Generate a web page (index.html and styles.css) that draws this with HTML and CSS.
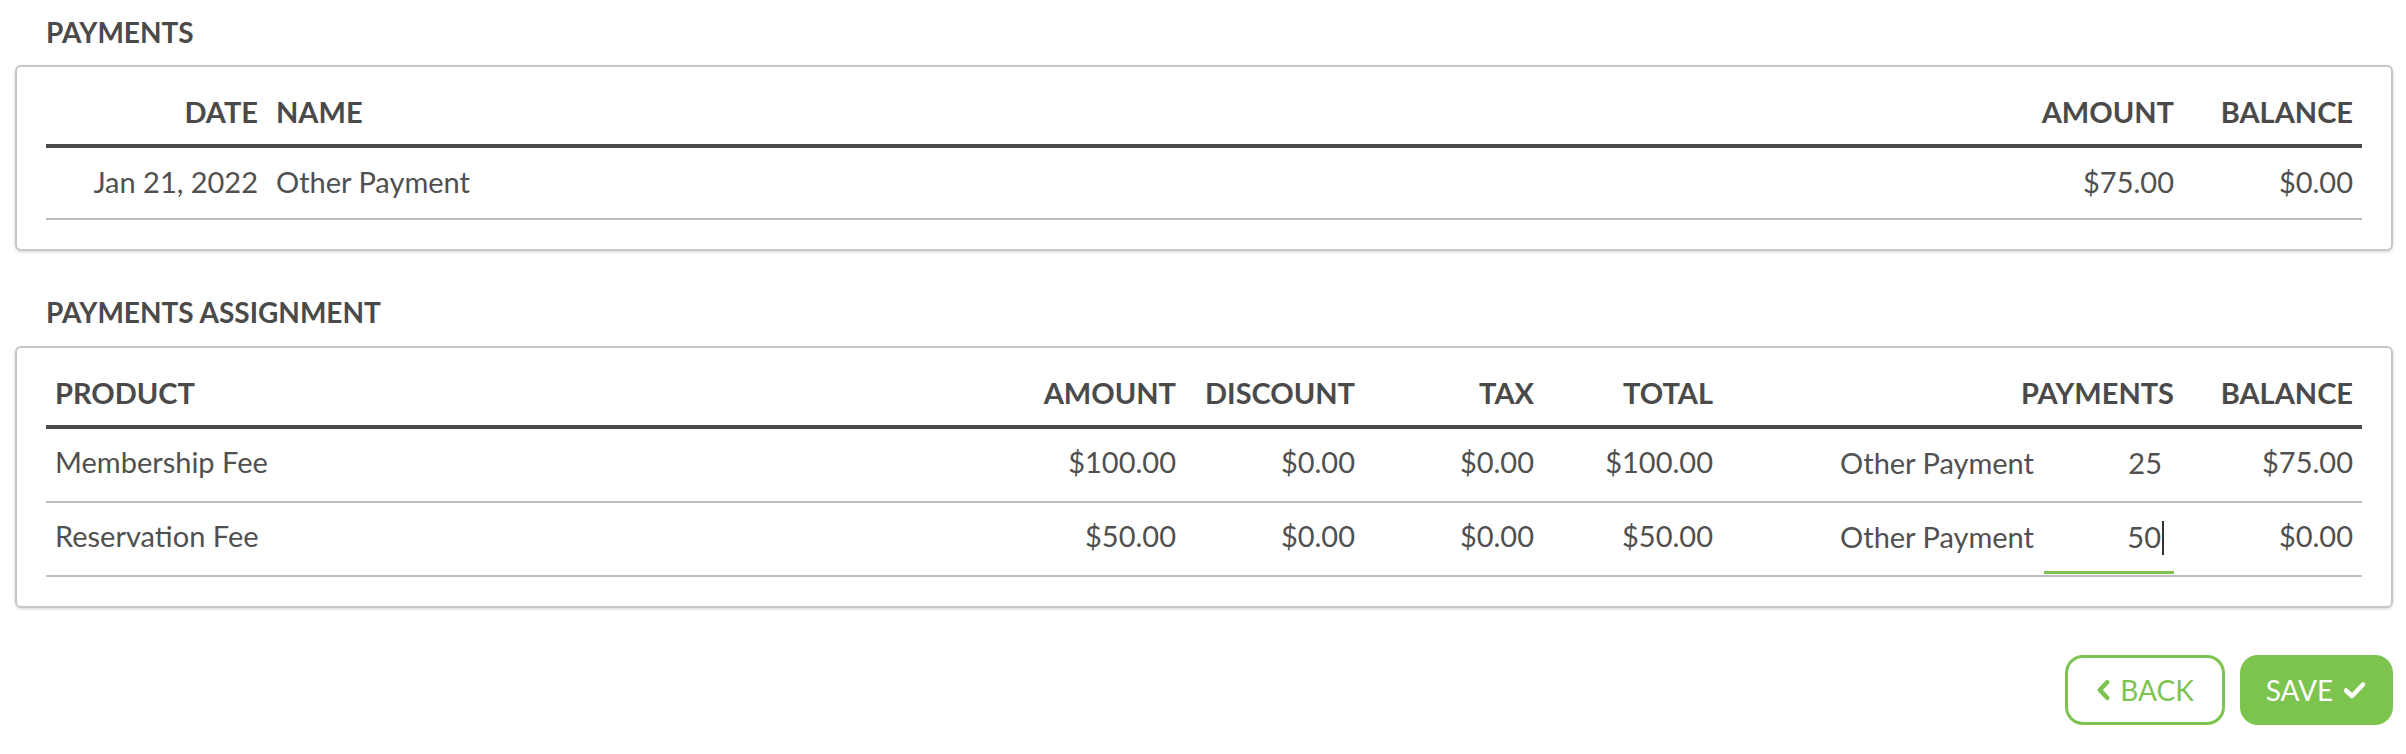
FILE: index.html
```html
<!DOCTYPE html>
<html lang="en">
<head>
    <meta charset="UTF-8">
    <meta name="viewport" content="width=device-width, initial-scale=1.0">
    <title>Payments</title>
    <link rel="stylesheet" href="styles.css">
</head>
<body>
    <div class="page">
        <h2 class="section-title">PAYMENTS</h2>
        <div class="card">
            <table class="grid">
                <thead>
                    <tr>
                        <th class="col-date right">DATE</th>
                        <th>NAME</th>
                        <th class="col-money right">AMOUNT</th>
                        <th class="col-money right">BALANCE</th>
                    </tr>
                </thead>
                <tbody>
                    <tr>
                        <td class="right">Jan 21, 2022</td>
                        <td>Other Payment</td>
                        <td class="right">$75.00</td>
                        <td class="right">$0.00</td>
                    </tr>
                </tbody>
            </table>
        </div>

        <h2 class="section-title second">PAYMENTS ASSIGNMENT</h2>
        <div class="card">
            <table class="grid assign">
                <thead>
                    <tr>
                        <th>PRODUCT</th>
                        <th class="col-money right">AMOUNT</th>
                        <th class="col-money right">DISCOUNT</th>
                        <th class="col-money right">TAX</th>
                        <th class="col-money right">TOTAL</th>
                        <th class="col-pay right">PAYMENTS</th>
                        <th class="col-money right">BALANCE</th>
                    </tr>
                </thead>
                <tbody>
                    <tr>
                        <td>Membership Fee</td>
                        <td class="right">$100.00</td>
                        <td class="right">$0.00</td>
                        <td class="right">$0.00</td>
                        <td class="right">$100.00</td>
                        <td class="pay-cell">
                            <div class="pay-line">
                                <span class="pay-name">Other Payment</span>
                                <span class="pay-input">25</span>
                            </div>
                        </td>
                        <td class="right">$75.00</td>
                    </tr>
                    <tr>
                        <td>Reservation Fee</td>
                        <td class="right">$50.00</td>
                        <td class="right">$0.00</td>
                        <td class="right">$0.00</td>
                        <td class="right">$50.00</td>
                        <td class="pay-cell">
                            <div class="pay-line">
                                <span class="pay-name">Other Payment</span>
                                <span class="pay-input active">50<span class="caret"></span></span>
                            </div>
                        </td>
                        <td class="right">$0.00</td>
                    </tr>
                </tbody>
            </table>
        </div>

        <div class="actions">
            <button class="btn btn-outline" type="button">
                <svg class="icon" viewBox="0 0 16 24" width="15" height="22"><path d="M12 3.5 L4 12 L12 20.5" fill="none" stroke="currentColor" stroke-width="5" stroke-linecap="round" stroke-linejoin="round"/></svg>
                BACK
            </button>
            <button class="btn btn-solid" type="submit">
                SAVE
                <svg class="icon" viewBox="0 0 24 20" width="25" height="20"><path d="M3.5 10.5 L9.5 16 L20.5 4.5" fill="none" stroke="currentColor" stroke-width="4.5" stroke-linecap="round" stroke-linejoin="round"/></svg>
            </button>
        </div>
    </div>
</body>
</html>
```

FILE: styles.css
```css
body {
    font-family: 'Lato', 'Open Sans', sans-serif;
    background-color: #ffffff;
    color: #505050;
    margin: 0;
    padding: 0;
}
.page {
    padding: 0 13px 0 15px;
}
.section-title {
    margin: 0;
    padding: 15px 0 0 31px;
    height: 50px;
    font-size: 28px;
    line-height: 34px;
    font-weight: 700;
    color: #4a4a4a;
}
.section-title.second {
    padding-top: 44px;
    height: 51px;
}
.card {
    border: 2px solid #c6c6c6;
    border-radius: 6px;
    box-shadow: 0 1px 3px rgba(0, 0, 0, 0.18);
    padding: 0 29px 29px;
}
.grid {
    width: 100%;
    border-collapse: collapse;
    table-layout: fixed;
}
.grid th {
    text-align: left;
    font-size: 29px;
    font-weight: 700;
    line-height: 34px;
    color: #4a4a4a;
    padding: 28px 9px 15px;
    border-bottom: 4px solid #4a4a4a;
    white-space: nowrap;
}
.grid td {
    font-size: 29px;
    line-height: 34px;
    padding: 17px 9px 19px;
    border-bottom: 2px solid #bdbdbd;
    white-space: nowrap;
}
.grid .right {
    text-align: right;
}
.col-date {
    width: 203px;
}
.col-money {
    width: 161px;
}
.col-pay {
    width: 443px;
}
.assign td {
    padding-top: 16px;
    padding-bottom: 22px;
}
.assign td.pay-cell {
    padding: 16px 9px 1px;
}
.pay-line {
    display: flex;
    justify-content: flex-end;
    align-items: flex-start;
    gap: 10px;
}
.pay-input {
    display: block;
    width: 130px;
    box-sizing: border-box;
    height: 54px;
    padding: 0 12px 17px;
    border-bottom: 3px solid transparent;
    text-align: right;
}
.pay-input.active {
    border-bottom-color: #7cc44e;
    padding-right: 10px;
}
.caret {
    display: inline-block;
    width: 2px;
    height: 34px;
    margin-left: 1px;
    vertical-align: -7px;
    background-color: #333;
}
.actions {
    display: flex;
    justify-content: flex-end;
    gap: 15px;
    padding-top: 47px;
}
.btn {
    display: flex;
    align-items: center;
    justify-content: center;
    gap: 9px;
    height: 70px;
    border-radius: 18px;
    font-family: 'Lato', sans-serif;
    font-size: 28px;
    cursor: pointer;
}
.btn-outline {
    width: 160px;
    border: 3px solid #7cc44e;
    background-color: #ffffff;
    color: #7cc44e;
}
.btn-solid {
    width: 153px;
    border: none;
    background-color: #7cc44e;
    color: #ffffff;
}
.icon {
    display: block;
}
```
